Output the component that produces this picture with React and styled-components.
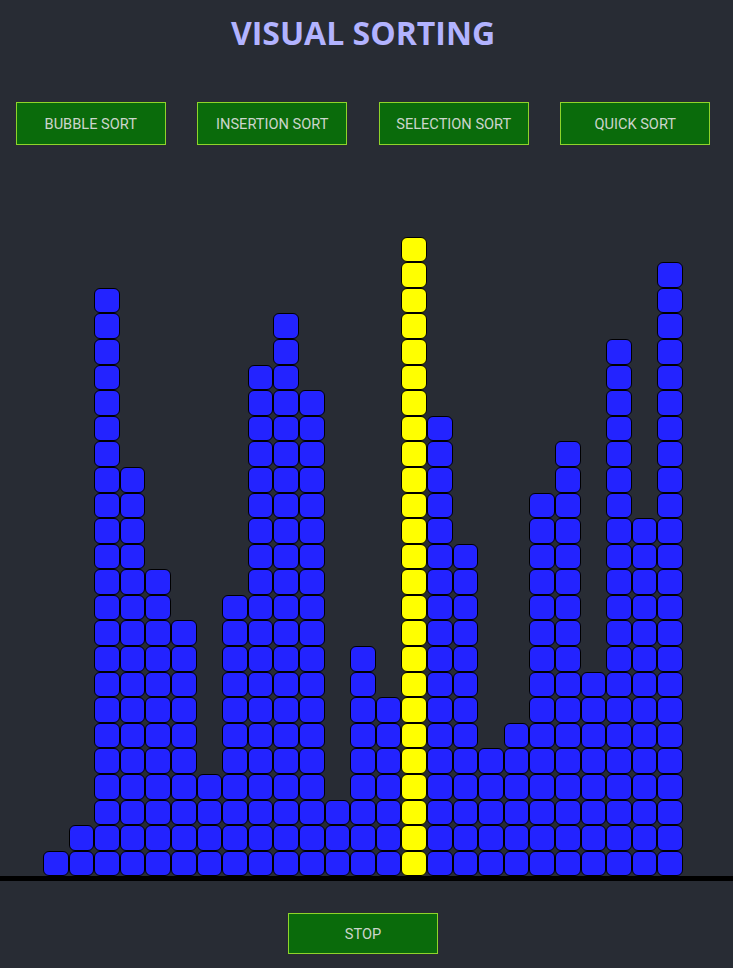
import React from "react";
import styled, { createGlobalStyle } from "styled-components";

const GlobalStyle = createGlobalStyle`
  html, body {
    margin: 0;
    padding: 0;
    background: #282c34;
  }
  * { box-sizing: border-box; }
`;

const Page = styled.div`
  width: 100%;
  display: flex;
  flex-direction: column;
  background: #282c34;
`;

const Section = styled.div`
  width: 726px;
`;

const Title = styled.h1`
  margin: 0;
  padding-top: 14px;
  font-family: "Open Sans", "Noto Sans", sans-serif;
  font-weight: 700;
  font-size: 32px;
  line-height: 38.4px;
  text-align: center;
  color: #b2b3ff;
`;

const ButtonRow = styled.div`
  margin-top: 50px;
  display: flex;
  justify-content: space-around;
`;

const SortButton = styled.button`
  width: 150px;
  height: ${(p) => p.$h || 43}px;
  margin: 0;
  padding: 0;
  background: #0a6b0b;
  border: 1px solid #8fd42a;
  border-radius: 0;
  color: #ccd5cc;
  font-family: Roboto, "Liberation Sans", sans-serif;
  font-size: 14.6px;
  font-weight: 400;
  text-transform: uppercase;
  cursor: pointer;
`;

const BarFloor = styled.div`
  width: 100%;
  border-bottom: 5px solid #000;
`;

const BarArea = styled.div`
  width: 726px;
  height: 731px;
  display: flex;
  justify-content: center;
  align-items: flex-end;
`;

const Column = styled.div`
  width: 25.6px;
  display: flex;
  flex-direction: column;
`;

const Cell = styled.div`
  width: 25.6px;
  height: 25.6px;
  border: 1px solid #000;
  border-radius: 6px;
  background: ${(p) => (p.$active ? "#ffff00" : "#2323ff")};
`;

const StopRow = styled.div`
  width: 726px;
  margin-top: 32px;
  display: flex;
  justify-content: center;
`;

const heights = [1, 2, 23, 16, 12, 10, 4, 11, 20, 22, 19, 3, 9, 7, 25, 18, 13, 5, 6, 15, 17, 8, 21, 14, 24];
const activeIndex = 14;

export default function App() {
  return (
    <>
      <GlobalStyle />
      <Page>
        <Section>
          <Title>VISUAL SORTING</Title>
          <ButtonRow>
            <SortButton>Bubble Sort</SortButton>
            <SortButton>Insertion Sort</SortButton>
            <SortButton>Selection Sort</SortButton>
            <SortButton>Quick Sort</SortButton>
          </ButtonRow>
        </Section>
        <BarFloor>
          <BarArea>
            {heights.map((h, i) => (
              <Column key={i}>
                {Array.from({ length: h }).map((_, j) => (
                  <Cell key={j} $active={i === activeIndex} />
                ))}
              </Column>
            ))}
          </BarArea>
        </BarFloor>
        <StopRow>
          <SortButton $h={41}>Stop</SortButton>
        </StopRow>
      </Page>
    </>
  );
}
